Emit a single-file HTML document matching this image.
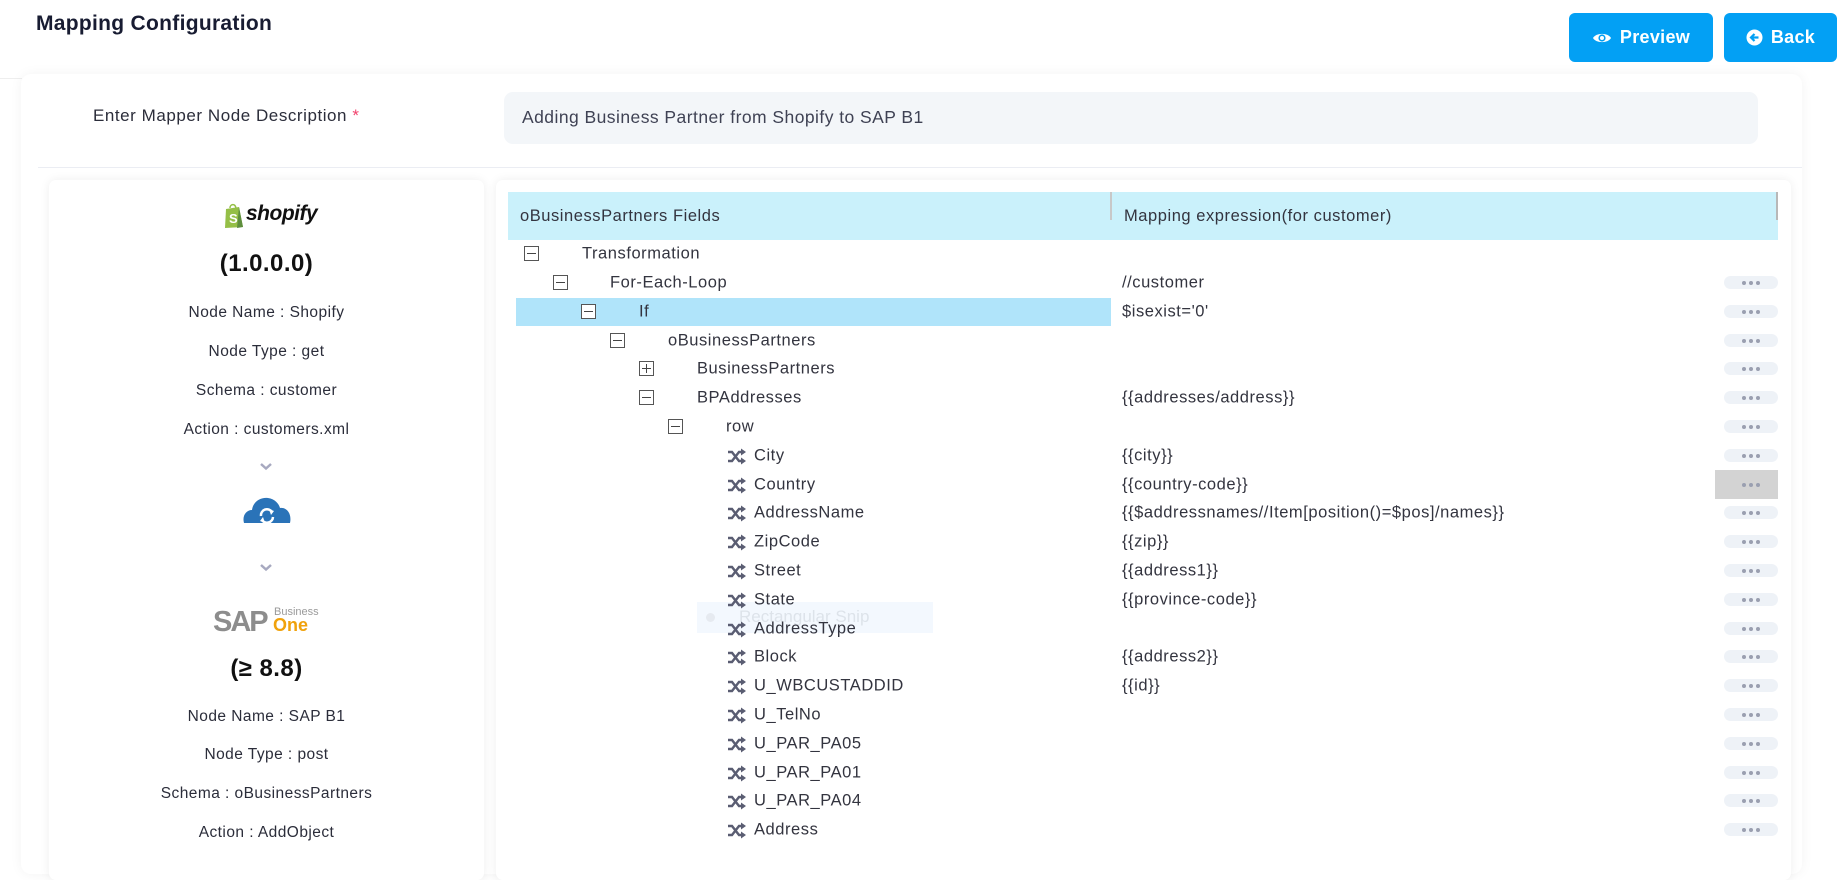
<!DOCTYPE html>
<html><head><meta charset="utf-8"><style>
*{box-sizing:border-box;margin:0;padding:0}
body{width:1848px;height:847px;overflow:hidden;background:#fff;font-family:"Liberation Sans",sans-serif;color:#2b2d3a;position:relative}
.a{position:absolute}
.btn{position:absolute;top:13px;height:49px;background:#03a0f4;border-radius:6px;color:#fff;font-weight:bold;font-size:18px;display:flex;align-items:center;justify-content:center;gap:8px;letter-spacing:0.3px}
.c{position:absolute;left:49px;width:435px;text-align:center;font-size:15.5px;color:#2b2d3a;letter-spacing:0.45px}
.row{position:absolute;left:508px;width:1270px;height:29px;font-size:16.5px;color:#33343f;letter-spacing:0.55px}
.row span{position:absolute;top:50%;transform:translateY(-50%);white-space:nowrap}
.tg{position:absolute;top:7px;width:15px;height:15px;border:1.5px solid #555;background:#fff}
.tg:before{content:"";position:absolute;left:2px;right:2px;top:5.5px;height:1.5px;background:#444}
.tg.p:after{content:"";position:absolute;top:2px;bottom:2px;left:5.5px;width:1.5px;background:#444}
.dots{position:absolute;left:1216px;top:8px;width:54px;height:13px;border-radius:7px;background:#eef2f7;display:flex;align-items:center;justify-content:center;gap:3px}
.dots i{width:4px;height:4px;border-radius:50%;background:#9a9fb0}
.sh{position:absolute;left:219px;top:7px}
</style></head><body>

<div class="a" style="left:36px;top:12px;font-size:21px;font-weight:bold;color:#181c32;letter-spacing:0.3px">Mapping Configuration</div>
<div class="a" style="left:0;top:78px;width:22px;height:1px;background:#eee"></div>
<div class="btn" style="left:1569px;width:144px">
<svg width="20" height="14" viewBox="0 0 20 14"><path d="M1 7C4 1.5 16 1.5 19 7C16 12.5 4 12.5 1 7Z" fill="#fff"/><circle cx="10" cy="7" r="3.6" fill="#03a0f4"/><circle cx="10" cy="7" r="2" fill="#fff"/></svg>Preview</div>
<div class="btn" style="left:1724px;width:113px">
<svg width="17" height="17" viewBox="0 0 17 17"><circle cx="8.5" cy="8.5" r="8" fill="#fff"/><path d="M12.5 8.5H5.5M8.5 5L5 8.5L8.5 12" stroke="#03a0f4" stroke-width="2.2" fill="none"/></svg>Back</div>

<div class="a" style="left:21px;top:74px;width:1781px;height:800px;border-radius:10px;box-shadow:0 0 12px rgba(0,0,0,0.05)"></div>
<div class="a" style="left:93px;top:106px;font-size:17px;color:#2b2d3a;letter-spacing:0.55px">Enter Mapper Node Description <span style="color:#f1416c">*</span></div>
<div class="a" style="left:504px;top:92px;width:1254px;height:52px;background:#f3f6f9;border-radius:9px"></div>
<div class="a" style="left:522px;top:107px;font-size:17.5px;color:#3f4254;letter-spacing:0.45px">Adding Business Partner from Shopify to SAP B1</div>
<div class="a" style="left:38px;top:167px;width:1764px;height:1px;background:#ebedf3"></div>

<!-- left card -->
<div class="a" style="left:49px;top:180px;width:435px;height:700px;border-radius:7px;background:#fff;box-shadow:0 0 10px rgba(0,0,0,0.07)"></div>
<div class="a" style="left:224px;top:202px;width:90px;height:30px">
<svg width="20" height="26" viewBox="0 0 20 26" style="position:absolute;left:0;top:1px"><path d="M2 6L15 4L19 24L1 25Z" fill="#95bf47"/><path d="M15 4L19 24L13 25Z" fill="#5e8e3e"/><path d="M6 5C6 1 11 0 12 5" stroke="#95bf47" stroke-width="1.5" fill="none"/><text x="5" y="20" font-size="13" font-weight="bold" fill="#fff" font-family="Liberation Sans">S</text></svg>
<div style="position:absolute;left:22px;top:0;font-size:21px;font-weight:bold;font-style:italic;color:#111;letter-spacing:-0.5px">shopify</div></div>
<div class="c" style="top:250px;font-size:24px;font-weight:bold;color:#111">(1.0.0.0)</div>
<div class="c" style="top:304px">Node Name : Shopify</div>
<div class="c" style="top:343px">Node Type : get</div>
<div class="c" style="top:382px">Schema : customer</div>
<div class="c" style="top:421px">Action : customers.xml</div>
<svg class="a" style="left:259px;top:462px" width="14" height="9" viewBox="0 0 14 9"><path d="M2 2L7 6.5L12 2" stroke="#a7a9c0" stroke-width="2.5" fill="none"/></svg>
<svg class="a" style="left:242px;top:494px" width="50" height="30" viewBox="0 0 50 30"><path d="M2 29C0 22 4 16 10 16C11 8 18 3 26 4C33 5 37 10 38 14C45 13 50 20 48 29Z" fill="#2a73b8"/><path d="M19 22A6 6 0 0 1 30 18" fill="none" stroke="#fff" stroke-width="2.5"/><path d="M31 23A6 6 0 0 1 20 26" fill="none" stroke="#fff" stroke-width="2.5"/><path d="M27 15L32 17L29 21Z" fill="#fff"/><path d="M23 29L18 27L21 23Z" fill="#fff"/></svg>
<svg class="a" style="left:259px;top:563px" width="14" height="9" viewBox="0 0 14 9"><path d="M2 2L7 6.5L12 2" stroke="#a7a9c0" stroke-width="2.5" fill="none"/></svg>
<div class="a" style="left:213px;top:604px;width:110px;height:34px">
<div style="position:absolute;left:0;top:2px;font-size:29px;font-weight:bold;color:#8d8d8d;letter-spacing:-2px">SAP</div>
<div style="position:absolute;left:61px;top:2px;font-size:11px;color:#9a9a9a">Business</div>
<div style="position:absolute;left:60px;top:11px;font-size:18px;font-weight:bold;color:#f0a20c">One</div></div>
<div class="c" style="top:655px;font-size:24px;font-weight:bold;color:#111">(≥ 8.8)</div>
<div class="c" style="top:708px">Node Name : SAP B1</div>
<div class="c" style="top:746px">Node Type : post</div>
<div class="c" style="top:785px">Schema : oBusinessPartners</div>
<div class="c" style="top:824px">Action : AddObject</div>

<!-- right card -->
<div class="a" style="left:496px;top:180px;width:1295px;height:700px;border-radius:7px;background:#fff;box-shadow:0 0 10px rgba(0,0,0,0.07)"></div>
<div class="a" style="left:508px;top:192px;width:1270px;height:48px;background:#caf1fb"></div>
<div class="a" style="left:1110px;top:192px;width:2px;height:28px;background:#c8c8c8"></div>
<div class="a" style="left:1776px;top:192px;width:2px;height:28px;background:#b8b8b8"></div>
<div class="a" style="left:520px;top:207px;font-size:16.5px;color:#33343f;letter-spacing:0.55px">oBusinessPartners Fields</div>
<div class="a" style="left:1124px;top:207px;font-size:16.5px;color:#33343f;letter-spacing:0.55px">Mapping expression(for customer)</div>

<div class="a" style="left:516px;top:298px;width:595px;height:28px;background:#b0e4fa"></div>
<div class="a" style="left:1715px;top:470px;width:63px;height:29px;background:#d3d3d3"></div>
<div class="a" style="left:697px;top:602px;width:236px;height:31px;background:#f3f8fe"></div>
<div class="a" style="left:706px;top:613px;width:9px;height:9px;border-radius:50%;background:#e6eaf0"></div>
<div class="a" style="left:739px;top:607px;font-size:17px;color:#dde3ea">Rectangular Snip</div>

<svg width="0" height="0" style="position:absolute"><defs><g id="shf"><path d="M1 4H5L12 13H16M1 13H5L12 4H16" stroke="#5a5d72" stroke-width="2.4" fill="none"/><path d="M14 0.5L19 4L14 7.5ZM14 9.5L19 13L14 16.5Z" fill="#5a5d72"/></g></defs></svg>

<div class="row" style="top:239px"><i class="tg" style="left:16px"></i><span style="left:74px">Transformation</span></div>
<div class="row" style="top:268px"><i class="tg" style="left:45px"></i><span style="left:102px">For-Each-Loop</span><span style="left:614px">//customer</span><b class="dots"><i></i><i></i><i></i></b></div>
<div class="row" style="top:297px"><i class="tg" style="left:73px"></i><span style="left:131px">If</span><span style="left:614px">$isexist='0'</span><b class="dots"><i></i><i></i><i></i></b></div>
<div class="row" style="top:326px"><i class="tg" style="left:102px"></i><span style="left:160px">oBusinessPartners</span><b class="dots"><i></i><i></i><i></i></b></div>
<div class="row" style="top:354px"><i class="tg p" style="left:131px"></i><span style="left:189px">BusinessPartners</span><b class="dots"><i></i><i></i><i></i></b></div>
<div class="row" style="top:383px"><i class="tg" style="left:131px"></i><span style="left:189px">BPAddresses</span><span style="left:614px">{{addresses/address}}</span><b class="dots"><i></i><i></i><i></i></b></div>
<div class="row" style="top:412px"><i class="tg" style="left:160px"></i><span style="left:218px">row</span><b class="dots"><i></i><i></i><i></i></b></div>
<div class="row" style="top:441px"><svg class="sh" width="20" height="17"><use href="#shf"/></svg><span style="left:246px">City</span><span style="left:614px">{{city}}</span><b class="dots"><i></i><i></i><i></i></b></div>
<div class="row" style="top:470px"><svg class="sh" width="20" height="17"><use href="#shf"/></svg><span style="left:246px">Country</span><span style="left:614px">{{country-code}}</span><b class="dots" style="background:none"><i></i><i></i><i></i></b></div>
<div class="row" style="top:498px"><svg class="sh" width="20" height="17"><use href="#shf"/></svg><span style="left:246px">AddressName</span><span style="left:614px">{{$addressnames//Item[position()=$pos]/names}}</span><b class="dots"><i></i><i></i><i></i></b></div>
<div class="row" style="top:527px"><svg class="sh" width="20" height="17"><use href="#shf"/></svg><span style="left:246px">ZipCode</span><span style="left:614px">{{zip}}</span><b class="dots"><i></i><i></i><i></i></b></div>
<div class="row" style="top:556px"><svg class="sh" width="20" height="17"><use href="#shf"/></svg><span style="left:246px">Street</span><span style="left:614px">{{address1}}</span><b class="dots"><i></i><i></i><i></i></b></div>
<div class="row" style="top:585px"><svg class="sh" width="20" height="17"><use href="#shf"/></svg><span style="left:246px">State</span><span style="left:614px">{{province-code}}</span><b class="dots"><i></i><i></i><i></i></b></div>
<div class="row" style="top:614px"><svg class="sh" width="20" height="17"><use href="#shf"/></svg><span style="left:246px">AddressType</span><b class="dots"><i></i><i></i><i></i></b></div>
<div class="row" style="top:642px"><svg class="sh" width="20" height="17"><use href="#shf"/></svg><span style="left:246px">Block</span><span style="left:614px">{{address2}}</span><b class="dots"><i></i><i></i><i></i></b></div>
<div class="row" style="top:671px"><svg class="sh" width="20" height="17"><use href="#shf"/></svg><span style="left:246px">U_WBCUSTADDID</span><span style="left:614px">{{id}}</span><b class="dots"><i></i><i></i><i></i></b></div>
<div class="row" style="top:700px"><svg class="sh" width="20" height="17"><use href="#shf"/></svg><span style="left:246px">U_TelNo</span><b class="dots"><i></i><i></i><i></i></b></div>
<div class="row" style="top:729px"><svg class="sh" width="20" height="17"><use href="#shf"/></svg><span style="left:246px">U_PAR_PA05</span><b class="dots"><i></i><i></i><i></i></b></div>
<div class="row" style="top:758px"><svg class="sh" width="20" height="17"><use href="#shf"/></svg><span style="left:246px">U_PAR_PA01</span><b class="dots"><i></i><i></i><i></i></b></div>
<div class="row" style="top:786px"><svg class="sh" width="20" height="17"><use href="#shf"/></svg><span style="left:246px">U_PAR_PA04</span><b class="dots"><i></i><i></i><i></i></b></div>
<div class="row" style="top:815px"><svg class="sh" width="20" height="17"><use href="#shf"/></svg><span style="left:246px">Address</span><b class="dots"><i></i><i></i><i></i></b></div>
</body></html>
